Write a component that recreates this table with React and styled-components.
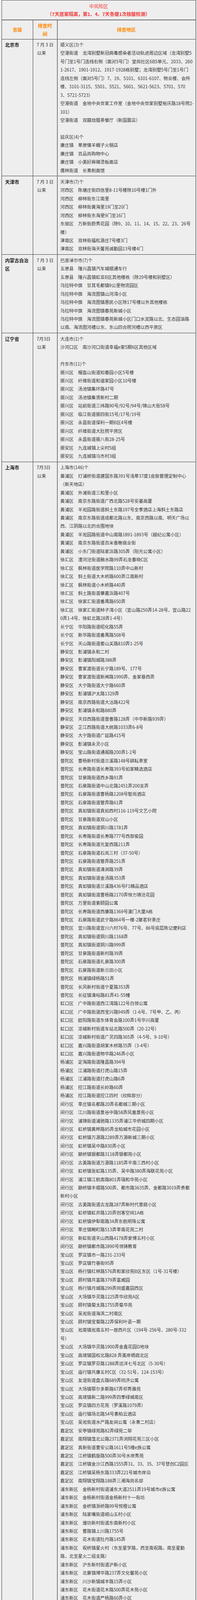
import React from 'react';
import styled, { createGlobalStyle } from 'styled-components';

const GlobalStyle = createGlobalStyle`
  html, body {
    margin: 0;
    padding: 0;
    background: #ededed;
  }
  body {
    font-family: "Noto Sans CJK SC", "Noto Sans", sans-serif;
  }
`;

const Sheet = styled.div`
  padding: 0 4px;
`;

const Table = styled.table`
  width: 497px;
  border-collapse: collapse;
  table-layout: fixed;
  background: #eeeeee;
  border: 1px solid #4a4a4a;
  border-right: 2px solid #858585;
`;

const Col = styled.col`
  width: ${p => p.$w}px;
`;

const TitleCell = styled.td`
  text-align: center;
  padding: 4.5px 0 4px;
  line-height: 20px;
  font-size: 12px;
  color: #f23a3a;
  border-bottom: 2px solid #6b6b6b;
`;

const TitleMain = styled.div`
  font-weight: 400;
`;

const TitleSub = styled.div`
  font-weight: 700;
`;

const HeadCell = styled.td`
  text-align: center;
  vertical-align: middle;
  padding: 3px 8px;
  line-height: 21px;
  font-size: 12px;
  font-weight: 700;
  color: #ff8a00;
  border: 1px solid #3c3c3c;
  border-left: ${p => (p.$wide ? '2px solid #7d7d7d' : '1px solid #3c3c3c')};
`;

const ProvinceCell = styled.td`
  vertical-align: top;
  padding: 3.5px 8px;
  line-height: 21.43px;
  font-size: 12px;
  font-weight: 700;
  color: #1f1f1f;
  border: 1px solid #3c3c3c;
`;

const DateCell = styled.td`
  vertical-align: top;
  padding: 3.5px 6px 3.5px 9px;
  line-height: 21.43px;
  font-size: 11.4px;
  color: #333;
  border: 1px solid #3c3c3c;
`;

const DateLine = styled.div`
  white-space: nowrap;
  padding-left: ${p => (p.$indent ? 1 : 0)}px;
`;

const AreaCell = styled.td`
  vertical-align: top;
  padding: 3.5px 6px 3.5px 7px;
  line-height: 21.43px;
  font-size: 11.4px;
  color: #363636;
  border: 1px solid #3c3c3c;
  border-left: 2px solid #7d7d7d;
`;

const AreaLine = styled.div`
  white-space: pre;
  min-height: 21.43px;
`;

const S = '\u3000';

const provinces = [
  {
    name: '北京市',
    date: '7 月 3 日',
    lines: [
      '顺义区(3)个',
      `空港街道${S}龙湾别墅新冠病毒感染者活动轨迹周边区域（龙湾别墅5\n号门至1号门连线右侧（面对5号门）堂尚社区6B5单元、2033、260\n1-2617、1901-1912、1917-1928栋别墅；龙湾别墅5号门至1号门\n连线左侧（面对5号门）7、19、5101、6101-6107、物业楼、会所\n楼、3101-3115、5501、5521、5601、5621-5623、5701、570\n3、5721-5723）`,
      `空港街道${S}金地中央世家工作室（金地中央世家别墅裕庆路18号院2-\n101）`,
      `空港街道${S}双囍烧腊茶餐厅（新国展店）`,
      '',
      '延庆区(4)个',
      `康庄镇${S}草原情羊蝎子火锅店`,
      `康庄镇${S}百品尚购物中心`,
      `康庄镇${S}小美好麻辣烫板面店`,
      `儒林街道${S}长青削面馆`,
    ],
  },
  {
    name: '天津市',
    date: '7 月 3 日',
    lines: [
      '天津市(7)个',
      `河西区${S}陈塘庄街四信里8-11号楼除10号楼1门外`,
      `河西区${S}柳林街东江南里`,
      `河西区${S}柳林街黄海里19门至20门`,
      `河西区${S}柳林街东海里9门至16门`,
      `东丽区${S}万新街蔚秀花园（除9、10、11、14、15、22、23、26号\n楼）`,
      `津南区${S}双林街福松源庄7号楼3门`,
      `津南区${S}双林街海天馨苑诚勤园13号楼4门`,
    ],
  },
  {
    name: '内蒙古自治区',
    date: '7 月 3 日',
    lines: [
      '巴彦淖尔市(7)个',
      `五原县${S}隆兴昌镇汽车城顺通车行`,
      `五原县${S}隆兴昌镇虹亚B区其他楼栋（除29号楼和别墅区）`,
      `乌拉特中旗${S}甘其毛都镇9公里物流园区`,
      `乌拉特中旗${S}海流图镇山河湾小区`,
      `乌拉特中旗${S}海流图镇惠民小区除17号楼以外其他楼栋`,
      `乌拉特中旗${S}海流图镇春苑新城小区`,
      `乌拉特中旗${S}海流图镇春苑新城小区门口水泥路以北、生态园油路\n以南、海流图河槽以东、东山四合院河槽以西平房区`,
    ],
  },
  {
    name: '辽宁省',
    date: '7月3日',
    lines: [
      '大连市(1)个',
      `沙河口区${S}南沙河口街道幸福e家5期6区其他区域`,
      '',
      '丹东市(11)个',
      `振兴区${S}帽盔山街道知春园小区5号楼`,
      `振兴区${S}纤维街道和谐家园小区10号楼`,
      `振兴区${S}汤池镇集环路47号`,
      `振兴区${S}汤池镇集贤新村二期`,
      `振兴区${S}站前街道三纬路90号/92号/94号/锦山大街58号`,
      `振兴区${S}临江街道振四街15号/17号/19号`,
      `振兴区${S}永昌街道保利一期B区4号楼`,
      `振兴区${S}纤维街道大肚院平房区`,
      `振兴区${S}永昌街道振八街28-25号`,
      `振安区${S}九连城镇上尖村5组`,
      `振安区${S}九连城镇马市村3组`,
    ],
  },
];

const shanghai = [
  ['黄浦区', '打浦桥街道建国东路391号浅草37度1皮肤管理定制中心\n（新天地店）'],
  ['黄浦区', '外滩街道三和里小区'],
  ['黄浦区', '南京东路街道广西北路528号安基商厦'],
  ['黄浦区', '半淞园路街道斜土东路197号全季酒店上海斜土东路店'],
  ['黄浦区', '南京东路街道成都北路以东、南京西路以南、明天广场以\n西、江阴路以北的合围地块'],
  ['黄浦区', '半淞园路街道中山南路1891-1893号（越纪公寓小区）'],
  ['黄浦区', '南京东路街道百米香榭商业街'],
  ['黄浦区', '小东门街道陆家浜路305弄（阳光公寓小区）'],
  ['徐汇区', '漕河泾街道融水路99弄石龙春晓C区'],
  ['徐汇区', '枫林街道医学院路110弄中山新村'],
  ['徐汇区', '斜土街道大木桥路600弄江南新村'],
  ['徐汇区', '枫林街道小木桥路440弄'],
  ['徐汇区', '斜土路街道肇嘉浜路407号'],
  ['徐汇区', '徐家汇街道番禺路650弄'],
  ['徐汇区', '徐家汇街道柿子湾小区（宜山路250弄14-28号、宜山路22\n0弄1-4号、徐虹北路28弄1-4号）'],
  ['长宁区', '华阳路街道昭化路55弄'],
  ['长宁区', '新华路街道番禺路508号'],
  ['长宁区', '天山路街道娄山关路810弄1-25号'],
  ['静安区', '彭浦镇永和二村'],
  ['静安区', '彭浦镇阳城路388弄'],
  ['静安区', '曹家渡街道长宁路189号、177号'],
  ['静安区', '曹家渡街道新闸路1990弄、金家巷西弄'],
  ['静安区', '大宁路街道大宁路660弄'],
  ['静安区', '彭浦镇沪太路1329弄'],
  ['静安区', '南京西路街道大沽路422号'],
  ['静安区', '彭浦镇永和路880弄'],
  ['静安区', '天目西路街道普善路128弄（中华新路939弄）'],
  ['静安区', '芷江西路街道大统路1033弄6-8号'],
  ['静安区', '大宁路街道广延路415号'],
  ['静安区', '彭浦镇永灵小区'],
  ['静安区', '宝山路街道通阁路200弄1-2号'],
  ['普陀区', '曹杨新村街道兰溪路148号耕耘茶室'],
  ['普陀区', '长寿路街道长寿路393号如家精选酒店'],
  ['普陀区', '甘泉路街道西乡路91弄'],
  ['普陀区', '石泉路街道中山北路2451弄200支弄'],
  ['普陀区', '石泉路街道曹杨路1208号智尚酒店'],
  ['普陀区', '石泉路街道管弄路61弄'],
  ['普陀区', '真如镇街道真如西村116-119号文艺小院'],
  ['普陀区', '甘泉路街道双山小区'],
  ['普陀区', '真如镇街道铜川路1781弄'],
  ['普陀区', '长寿路街道长寿路777号西部俊园'],
  ['普陀区', '长寿路街道光复西路211弄'],
  ['普陀区', '石泉路街道石岚三村（37-50号）'],
  ['普陀区', '石泉路街道管弄路251弄'],
  ['普陀区', '真如镇街道清涧路39弄'],
  ['普陀区', '真如镇街道金汤路353弄'],
  ['普陀区', '真如镇街道兰溪路436号F1精品酒店'],
  ['普陀区', '真如镇街道曹杨路2170弄恒力锦沧花园'],
  ['普陀区', '万里街道紫颐园公寓'],
  ['普陀区', '长寿路街道西康路1369号澳门大厦A栋'],
  ['普陀区', '石泉路街道武宁路864号一楼-2聚茗轩茶庄'],
  ['普陀区', '宜川路街道宜川六村76号、77号、86号底层陈记便利店'],
  ['普陀区', '真如镇街道铜川路1168弄'],
  ['普陀区', '真如镇街道铜川路999弄'],
  ['普陀区', '甘泉路街道新村路39弄'],
  ['普陀区', '石泉路街道礼泉路300弄'],
  ['普陀区', '石泉路街道新兰田小区'],
  ['普陀区', '桃浦镇绿杨路51弄'],
  ['普陀区', '长风新村街道宁夏路353弄'],
  ['普陀区', '长征镇清峪路81弄41-55幢'],
  ['虹口区', '广中路街道西江湾路122号白领公寓'],
  ['虹口区', '广中路街道西宝兴路949弄（1-6号、7号甲、乙、丙）'],
  ['虹口区', '欧阳路街道东体育会路100弄1号华兴商厦'],
  ['虹口区', '凉城新村街道车站北路500弄（20-22号）'],
  ['虹口区', '凉城新村街道广灵四路365弄（4-5号、9-10号）'],
  ['虹口区', '嘉兴路街道胡家木桥路35弄（3-4号）'],
  ['虹口区', '嘉兴路街道物华路246弄小区'],
  ['杨浦区', '定海路街道隆昌路394号'],
  ['杨浦区', '江浦路街道打虎山路15弄'],
  ['杨浦区', '江浦路街道打虎山路6弄'],
  ['杨浦区', '控江路街道长岭路60弄'],
  ['杨浦区', '控江路街道控江四村（欣辉部分）'],
  ['闵行区', '莘庄镇名都路20弄名都城三期小区'],
  ['闵行区', '江川路街道景谷中路58弄凤凰景苑小区'],
  ['闵行区', '浦锦街道浦驰路1335弄浦江华侨城四期小区'],
  ['闵行区', '虹桥镇黄桦路85弄龙柏城市花园小区'],
  ['闵行区', '虹桥镇万源路2289弄万源新城三期小区'],
  ['闵行区', '虹桥镇吴中路830弄小区'],
  ['闵行区', '颛桥镇银都路3118弄银都苑小区'],
  ['闵行区', '古美路街道万源路1185弄平南三西村小区'],
  ['闵行区', '虹桥镇张虹路135弄、吴中路380弄海联花苑小区'],
  ['闵行区', '浦江镇江航南路801弄瑞和华苑小区'],
  ['闵行区', '颛桥镇丰顺路500弄、都市路3635弄、金都路3019弄贵都\n新村小区'],
  ['闵行区', '古美路街道古龙路287弄新时代景庭小区'],
  ['闵行区', '虹桥镇虹井路120弄创客空间1A栋'],
  ['闵行区', '虹桥镇伊犁南路34弄东航明珠公寓'],
  ['闵行区', '莘庄镇畹町路513弄莘南花苑二村'],
  ['闵行区', '新虹街道天山西路4178弄爱博五村小区'],
  ['闵行区', '颛桥镇都市路2890号领铸教育'],
  ['宝山区', '罗店镇市一路231-233号'],
  ['宝山区', '罗店镇竹巷街95弄'],
  ['宝山区', '杨行镇红林路576弄和家欣苑B区东区（1号-31号楼）'],
  ['宝山区', '顾村镇共富路379弄富威园'],
  ['宝山区', '杨行镇月城路299弄同盛嘉园西区'],
  ['宝山区', '大场镇华灵路1225弄华欣苑A区'],
  ['宝山区', '顾村镇菊太路1755弄菊华苑'],
  ['宝山区', '吴淞街道海滨二村南区'],
  ['宝山区', '顾村镇宝菊路22弄保利叶语一期'],
  ['宝山区', '淞南镇淞南五村一居西片区（194号-256号、280号-332\n号）'],
  ['宝山区', '大场镇华灵路1900弄金鑫花园D地块'],
  ['宝山区', '高境镇国权北路828 弄美岸栖庭北区'],
  ['宝山区', '罗店镇罗芬路1288弄远洋七号北区（5-30号）'],
  ['宝山区', '庙行镇共康五村C区（32-51号，124-153号）'],
  ['宝山区', '友谊街道盘古路689弄同济公寓'],
  ['宝山区', '大场镇鄂尔多斯路67弄祁秀雅苑'],
  ['宝山区', '高境镇新二路999弄四季绿城南区'],
  ['宝山区', '罗店镇四方花苑（罗溪路1079弄）'],
  ['宝山区', '庙行镇场北路54号素柏云酒店'],
  ['宝山区', '吴淞街道水产路友间公寓（永青二村店）'],
  ['嘉定区', '安亭镇绿苑路82弄绿苑二邨'],
  ['嘉定区', '南翔镇蕰北公路2371弄浏翔花苑三区小区'],
  ['嘉定区', '真新街道曹安公路1611号5楼e族公寓'],
  ['嘉定区', '江桥镇鹤旋路500弄30号水岸秀苑'],
  ['嘉定区', '江桥镇金沙江西路1555弄31、33、35、37号慧创C2园区'],
  ['嘉定区', '江桥镇吴杨东路333弄221号城市岸泊'],
  ['嘉定区', '南翔镇宝翔路188弄三湘海尚名邸'],
  ['浦东新区', '金杨新村街道浦东大道2511弄19号城市e族公寓'],
  ['浦东新区', '金杨新村街道金杨新村十一街坊'],
  ['浦东新区', '金桥镇浙桥路99号悦橙公寓'],
  ['浦东新区', '陆家嘴街道崂山五村小区'],
  ['浦东新区', '潍坊新村街道东南新村小区'],
  ['浦东新区', '曹路镇上川路1755号'],
  ['浦东新区', '花木街道牡丹路145弄'],
  ['浦东新区', '祝桥镇星火村（东至星学路，西至南祝路，南至星勤\n路，北至星火二组支路）'],
  ['浦东新区', '沪东新村街道沪新小区'],
  ['浦东新区', '北蔡镇博华路237弄文化馨苑小区'],
  ['浦东新区', '川沙新镇城丰路15弄小区'],
  ['浦东新区', '花木街道花木路500弄花木苑小区'],
  ['浦东新区', '花木街道严杨路60弄小区'],
  ['浦东新区', '陆家嘴街道富城路33号浦江楼'],
  ['浦东新区', '陆家嘴街道荣成路9弄荣城花苑小区'],
  ['浦东新区', '曹路镇川沙路669号暖暖花园公寓'],
  ['浦东新区', '川沙新镇乔港路27、29、31、33号区域'],
  ['浦东新区', '东明路街道环林东路879弄杉林新月家园第一居民区'],
  ['浦东新区', '高桥镇陆凌村一组'],
  ['浦东新区', '花木街道明月路199弄小区'],
  ['浦东新区', '金杨新村街道香山新村西北街坊'],
  ['浦东新区', '陆家嘴街道浦城路99弄仁恒滨江园'],
  ['浦东新区', '唐镇东唐苑南区'],
  ['浦东新区', '潍坊新村街道潍坊西路1弄世茂滨江花园（北区）'],
  ['浦东新区', '潍坊新村街道源竹小区'],
  ['浦东新区', '潍坊新村街道竹南小区'],
  ['松江区', '九里亭街道涞寅路658弄绿庭尚城'],
  ['松江区', '九亭镇九新公路180弄云润家园'],
  ['青浦区', '华新镇纪秀路158弄1-375号'],
  ['奉贤区', '金汇镇沿港河路350弄'],
];

provinces.push({
  name: '上海市',
  date: '7月3日',
  lines: [
    `上海市(${shanghai.length})个`,
    ...shanghai.map(([district, place]) => `${district}${S}${place}`),
  ],
});

const ProvinceRow = ({ province }) => (
  <tr>
    <ProvinceCell>{province.name}</ProvinceCell>
    <DateCell>
      <DateLine>{province.date}</DateLine>
      <DateLine $indent>以来</DateLine>
    </DateCell>
    <AreaCell>
      {province.lines.map((line, i) => (
        <AreaLine key={i}>{line}</AreaLine>
      ))}
    </AreaCell>
  </tr>
);

export default function App() {
  return (
    <>
      <GlobalStyle />
      <Sheet>
        <Table>
          <colgroup>
            <Col $w={80} />
            <Col $w={62} />
            <Col $w={355} />
          </colgroup>
          <tbody>
            <tr>
              <TitleCell colSpan={3}>
                <TitleMain>中风险区</TitleMain>
                <TitleSub>（7天居家隔离，第1、4、7天各做1次核酸检测）</TitleSub>
              </TitleCell>
            </tr>
            <tr>
              <HeadCell>省级</HeadCell>
              <HeadCell>排查时间</HeadCell>
              <HeadCell $wide>排查地区</HeadCell>
            </tr>
            {provinces.map(p => (
              <ProvinceRow key={p.name} province={p} />
            ))}
          </tbody>
        </Table>
      </Sheet>
    </>
  );
}
